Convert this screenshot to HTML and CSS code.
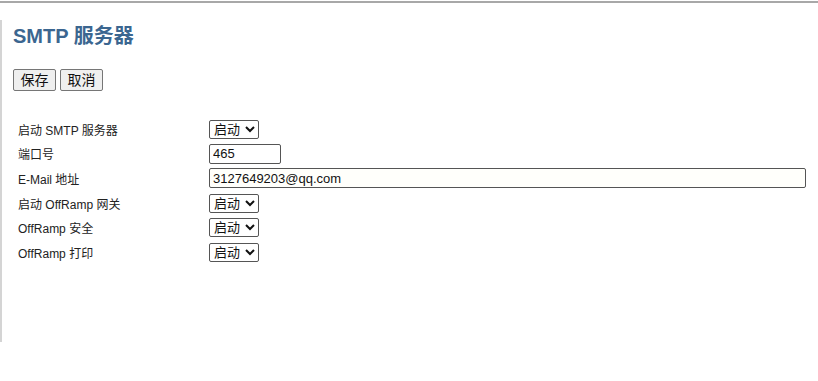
FILE: index.html
```html
<!DOCTYPE html>
<html>
<head>
<meta charset="utf-8">
<link rel="stylesheet" href="styles.css">
</head>
<body>
<div class="topline"></div>
<div class="page">
  <h1 class="title">SMTP 服务器</h1>
  <div class="buttons">
    <button class="btn">保存</button>
    <button class="btn">取消</button>
  </div>
  <table class="form">
    <tr><td class="lbl">启动 SMTP 服务器</td><td><select class="sel"><option>启动</option></select></td></tr>
    <tr><td class="lbl">端口号</td><td><input class="inp port" type="text" value="465"></td></tr>
    <tr><td class="lbl">E-Mail 地址</td><td><input class="inp mail" type="text" value="3127649203@qq.com"></td></tr>
    <tr><td class="lbl">启动 OffRamp 网关</td><td><select class="sel"><option>启动</option></select></td></tr>
    <tr><td class="lbl">OffRamp 安全</td><td><select class="sel"><option>启动</option></select></td></tr>
    <tr><td class="lbl">OffRamp 打印</td><td><select class="sel"><option>启动</option></select></td></tr>
  </table>
</div>
</body>
</html>
```

FILE: styles.css
```css
html, body {
  margin: 0;
  padding: 0;
  background: #fff;
  font-family: "Liberation Sans", Arial, "Noto Sans CJK SC", sans-serif;
  color: #222;
}
.topline {
  height: 2px;
  margin-top: 1px;
  background: #a8a8a8;
}
.page {
  border-left: 2px solid #d4d4d4;
  margin-top: 17px;
  height: 322px;
  padding-left: 11px;
}
.title {
  margin: 0;
  padding-top: 4px;
  font-size: 20px;
  font-weight: bold;
  color: #3b6690;
  line-height: 24px;
}
.buttons {
  margin-top: 21px;
  display: flex;
  gap: 4px;
}
.btn {
  font-family: "Liberation Sans", "Noto Sans CJK SC", sans-serif;
  font-size: 14px;
  height: 22px;
  width: 43px;
  padding: 0;
  background: #efefef;
  border: 1px solid #767676;
  border-radius: 2px;
  color: #111;
  line-height: 18px;
}
.form {
  margin-top: 26px;
  border-collapse: collapse;
  margin-left: 5px;
  font-size: 12px;
}
.form td {
  padding: 0;
  height: 24.6px;
}
.lbl {
  width: 191px;
  color: #222;
}
.sel {
  font-family: "Liberation Sans", "Noto Sans CJK SC", sans-serif;
  font-size: 13px;
  height: 19px;
  width: 50px;
  padding: 0;
  border: 1px solid #555;
  border-radius: 2px;
  background: #fff;
  color: #111;
}
.inp {
  font-family: "Liberation Sans", "Noto Sans CJK SC", sans-serif;
  font-size: 13px;
  height: 20px;
  box-sizing: border-box;
  padding: 0 3px;
  border: 1px solid #555;
  border-radius: 2px;
  color: #111;
}
.port { width: 72px; }
.mail { width: 597px; background: #fffffb; }
```
